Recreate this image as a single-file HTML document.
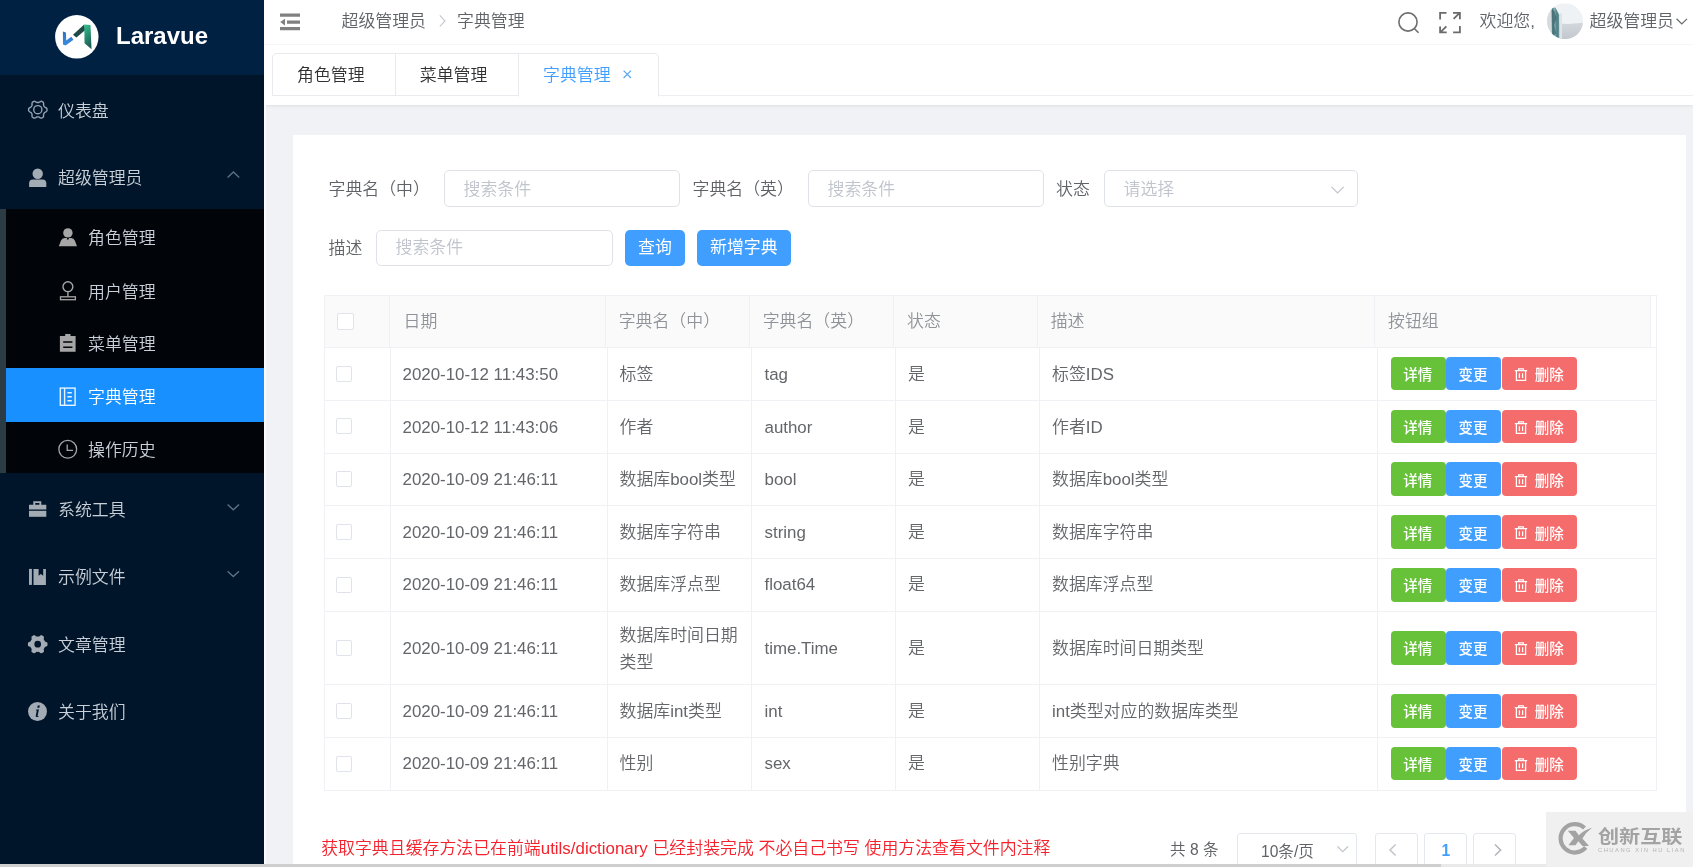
<!DOCTYPE html>
<html lang="zh-CN">
<head>
<meta charset="utf-8">
<title>Laravue - 字典管理</title>
<style>
*{box-sizing:border-box;margin:0;padding:0}
html,body{width:1693px;height:867px;overflow:hidden;background:#f0f2f5}
body{position:relative;font-family:"Liberation Sans","Noto Sans CJK SC",sans-serif;font-size:16.9px;color:#606266;font-weight:350}
#app{position:absolute;left:0;top:0;width:1693px;height:867px;overflow:hidden;will-change:transform}
.a{position:absolute;white-space:nowrap}
svg{position:absolute;overflow:visible}
/* sidebar */
#side{position:absolute;left:0;top:0;width:264px;height:864px;background:#001529;overflow:hidden}
#logo{position:absolute;left:0;top:0;width:264px;height:75px;background:#002142}
#logo .ttl{position:absolute;left:116px;top:20px;font-size:24px;line-height:32px;font-weight:bold;color:#fff}
.mt{position:absolute;left:58px;color:#c9d0d9;font-size:16.9px;line-height:24px;white-space:nowrap}
#sub{position:absolute;left:0;top:209px;width:264px;height:264px;background:#010409}
#sub .bar{position:absolute;left:0;top:0;width:6px;height:264px;background:#2b3c45}
#sub .on{position:absolute;left:6px;top:159px;width:258px;height:53.6px;background:#1890ff}
.st{position:absolute;left:88px;color:#c9d0d9;font-size:16.9px;line-height:24px;white-space:nowrap}
/* header */
#head{position:absolute;left:264px;top:0;width:1429px;height:105px;background:#fff;box-shadow:0 1px 3px rgba(0,21,41,.08)}
#nav{position:absolute;left:0;top:0;width:1429px;height:45px;border-bottom:1px solid #f7f7f7}
.bc{position:absolute;top:9.7px;line-height:24px;font-size:16.9px;color:#5f6368;white-space:nowrap}
#tabs{position:absolute;left:8px;top:53px;height:43px;width:1421px;border-bottom:1px solid #eceef2}
.tab{position:absolute;top:0;height:43px;border:1px solid #e8eaee;background:#fff}
.tt{position:absolute;top:63.7px;line-height:24px;font-size:16.9px;color:#303133;white-space:nowrap}
/* content */
#card{position:absolute;left:293px;top:135px;width:1393px;height:740px;background:#fff}
.lb{position:absolute;font-size:16.9px;line-height:24px;color:#5f6368;white-space:nowrap}
.inp{position:absolute;height:36px;border:1px solid #dfe2e8;border-radius:5px;background:#fff}
.ph{position:absolute;font-size:16.9px;line-height:24px;color:#c0c4cc;white-space:nowrap}
.btn{position:absolute;height:36px;border-radius:5px;background:#409eff}
.bt{position:absolute;color:#fff;font-size:16.9px;line-height:24px;white-space:nowrap;font-weight:400}
/* table */
.hl{position:absolute;background:#ebeef5}
.th{position:absolute;font-size:16.9px;line-height:24px;color:#909399;white-space:nowrap}
.td{position:absolute;font-size:16.9px;line-height:24px;color:#64666a;white-space:nowrap}
.cb{position:absolute;width:16px;height:16px;border:1px solid #e0e3e9;border-radius:2px;background:#fff}
.b{position:absolute;height:33.7px;border-radius:4px}
.bx{position:absolute;color:#fff;font-size:14.5px;line-height:20px;white-space:nowrap;font-weight:500}
.pg{position:absolute;height:34px;border:1px solid #e4e7ed;border-radius:3px;background:#fff}
</style>
</head>
<body><div id="app">
<div id="side">
<div id="logo">
<svg style="left:54.9px;top:14.7px" width="43.7" height="43.7" viewBox="195 130 585 580"><defs><linearGradient id="g1" x1="0" y1="0" x2="0.3" y2="1"><stop offset="0" stop-color="#35c48f"/><stop offset="1" stop-color="#1c5f57"/></linearGradient><linearGradient id="g2" x1="0" y1="0" x2="0" y2="1"><stop offset="0" stop-color="#2f6fc0"/><stop offset="1" stop-color="#3b8fe0"/></linearGradient></defs><circle cx="487" cy="420" r="291" fill="#fff"/><g transform="translate(487 418) scale(1.09) translate(-487 -418)"><path d="M316 353 L353 366 L357 464 L420 420 L446 456 L350 527 L317 514 Z" fill="url(#g2)"/><path d="M440 395 L578 268 L592 335 L482 428 Z" fill="#1f4a45"/><path d="M578 268 L655 275 L668 572 L582 500 Z" fill="url(#g1)"/></g></svg>
<div class="ttl">Laravue</div>
</div>
<svg style="left:0;top:0" width="264" height="864">
<path d="M47.00 109.70 L46.99 110.10 L46.96 110.50 L46.84 110.89 L46.52 111.24 L46.13 111.55 L45.72 111.82 L45.30 112.06 L44.89 112.28 L44.53 112.49 L44.33 112.74 L44.19 113.02 L44.04 113.30 L43.87 113.57 L43.70 113.83 L43.58 114.13 L43.58 114.55 L43.60 115.01 L43.60 115.50 L43.57 115.99 L43.49 116.48 L43.35 116.93 L43.08 117.24 L42.74 117.46 L42.40 117.67 L42.05 117.86 L41.69 118.04 L41.29 118.13 L40.83 118.02 L40.37 117.84 L39.92 117.62 L39.50 117.38 L39.11 117.14 L38.75 116.92 L38.43 116.87 L38.11 116.89 L37.80 116.90 L37.49 116.89 L37.17 116.87 L36.85 116.92 L36.49 117.14 L36.10 117.38 L35.68 117.62 L35.23 117.84 L34.77 118.02 L34.31 118.13 L33.91 118.04 L33.55 117.86 L33.20 117.67 L32.86 117.46 L32.52 117.24 L32.25 116.93 L32.11 116.48 L32.03 115.99 L32.00 115.50 L32.00 115.01 L32.02 114.55 L32.02 114.13 L31.90 113.83 L31.73 113.57 L31.56 113.30 L31.41 113.02 L31.27 112.74 L31.07 112.49 L30.71 112.28 L30.30 112.06 L29.88 111.82 L29.47 111.55 L29.08 111.24 L28.76 110.89 L28.64 110.50 L28.61 110.10 L28.60 109.70 L28.61 109.30 L28.64 108.90 L28.76 108.51 L29.08 108.16 L29.47 107.85 L29.88 107.58 L30.30 107.34 L30.71 107.12 L31.07 106.91 L31.27 106.66 L31.41 106.38 L31.56 106.10 L31.73 105.83 L31.90 105.57 L32.02 105.27 L32.02 104.85 L32.00 104.39 L32.00 103.90 L32.03 103.41 L32.11 102.92 L32.25 102.47 L32.52 102.16 L32.86 101.94 L33.20 101.73 L33.55 101.54 L33.91 101.36 L34.31 101.27 L34.77 101.38 L35.23 101.56 L35.68 101.78 L36.10 102.02 L36.49 102.26 L36.85 102.48 L37.17 102.53 L37.49 102.51 L37.80 102.50 L38.11 102.51 L38.43 102.53 L38.75 102.48 L39.11 102.26 L39.50 102.02 L39.92 101.78 L40.37 101.56 L40.83 101.38 L41.29 101.27 L41.69 101.36 L42.05 101.54 L42.40 101.73 L42.74 101.94 L43.08 102.16 L43.35 102.47 L43.49 102.92 L43.57 103.41 L43.60 103.90 L43.60 104.39 L43.58 104.85 L43.58 105.27 L43.70 105.57 L43.87 105.83 L44.04 106.10 L44.19 106.38 L44.33 106.66 L44.53 106.91 L44.89 107.12 L45.30 107.34 L45.72 107.58 L46.13 107.85 L46.52 108.16 L46.84 108.51 L46.96 108.90 L46.99 109.30Z" fill="none" stroke="#93a3b5" stroke-width="1.4" stroke-linejoin="round"/>
<circle cx="37.8" cy="109.7" r="4.1" fill="none" stroke="#93a3b5" stroke-width="1.4"/>
<circle cx="37.7" cy="173.8" r="5.2" fill="#a3abb5"/>
<path d="M29.1 186.9 v-3.6 a3.8 3.8 0 0 1 3.8 -3.8 h9.6 a3.8 3.8 0 0 1 3.8 3.8 v3.6 Z" fill="#a3abb5"/>
<path d="M227.6 177.4 L233.4 172 L239.2 177.4" fill="none" stroke="#5f6f82" stroke-width="1.4"/>
</svg>
<div class="mt" style="top:99.7px">仪表盘</div>
<div class="mt" style="top:167.1px">超级管理员</div>
<div id="sub"><div class="bar"></div><div class="on"></div></div>
<svg style="left:0;top:0" width="264" height="864">
<circle cx="67.9" cy="232.9" r="4.7" fill="#a6a6a6"/>
<path d="M58.8 246.2 L61 240.5 Q62 238.2 64.5 238 L66.7 238 L67.9 240.3 L69.1 238 L71.3 238 Q73.8 238.2 74.8 240.5 L77 246.2 Z" fill="#a6a6a6"/>
<circle cx="67.9" cy="286.7" r="4.9" fill="none" stroke="#a6a6a6" stroke-width="1.4"/>
<path d="M67.9 291.6 V296.8" stroke="#a6a6a6" stroke-width="1.4" fill="none"/>
<rect x="60.5" y="296.8" width="14.9" height="2.9" fill="none" stroke="#a6a6a6" stroke-width="1.3"/>
<path d="M59.9 336 H65.2 V333.9 H70.5 V336 H75.6 V351.8 H59.9 Z" fill="#a6a6a6"/>
<path d="M63.2 342 H72.4 M63.2 347.2 H72.4" stroke="#010409" stroke-width="1.5"/>
<rect x="60.3" y="388.1" width="14.8" height="17.2" fill="none" stroke="#e8f4ff" stroke-width="1.4"/>
<path d="M64.6 388 V405.4 M67.4 392.7 H71.8 M67.4 396.7 H71.8 M67.4 400.7 H71.8" stroke="#e8f4ff" stroke-width="1.4" fill="none"/>
<circle cx="67.75" cy="449.3" r="8.9" fill="none" stroke="#a6a6a6" stroke-width="1.3"/>
<path d="M67.2 444.6 V450.3 H73" stroke="#a6a6a6" stroke-width="1.3" fill="none"/>
<path d="M33.3 504.8 V501.3 H41.3 V504.8 H46.3 V509.6 H29 V504.8 Z M35.2 504.8 H39.4 V503.1 H35.2 Z" fill="#a3abb5" fill-rule="evenodd"/>
<rect x="29" y="510.8" width="17.3" height="6" fill="#a3abb5"/>
<path d="M227.6 504.4 L233.3 509.8 L239 504.4" fill="none" stroke="#5f6f82" stroke-width="1.4"/>
<path d="M227.6 571.2 L233.3 576.6 L239 571.2" fill="none" stroke="#5f6f82" stroke-width="1.4"/>
<rect x="29" y="568.9" width="2.9" height="16" fill="#a3abb5"/>
<path d="M33.5 568.9 H38.6 V575.8 L40.9 574 L43.2 575.8 V568.9 H45.9 V584.9 H33.5 Z" fill="#a3abb5"/>
<path d="M47.50 644.20 L47.49 644.63 L47.46 645.05 L47.42 645.48 L47.25 645.88 L46.72 646.20 L46.15 646.46 L45.58 646.68 L45.03 646.87 L44.81 647.15 L44.68 647.45 L44.53 647.76 L44.37 648.05 L44.19 648.34 L44.01 648.62 L43.81 648.89 L43.68 649.22 L43.79 649.78 L43.89 650.39 L43.94 651.01 L43.93 651.63 L43.67 651.97 L43.32 652.23 L42.97 652.47 L42.60 652.69 L42.23 652.89 L41.84 653.08 L41.45 653.25 L41.02 653.31 L40.48 653.01 L39.96 652.65 L39.49 652.27 L39.06 651.89 L38.71 651.83 L38.37 651.87 L38.04 651.89 L37.70 651.90 L37.36 651.89 L37.03 651.87 L36.69 651.83 L36.34 651.89 L35.91 652.27 L35.44 652.65 L34.92 653.01 L34.38 653.31 L33.95 653.25 L33.56 653.08 L33.17 652.89 L32.80 652.69 L32.43 652.47 L32.08 652.23 L31.73 651.97 L31.47 651.63 L31.46 651.01 L31.51 650.39 L31.61 649.78 L31.72 649.22 L31.59 648.89 L31.39 648.62 L31.21 648.34 L31.03 648.05 L30.87 647.76 L30.72 647.45 L30.59 647.15 L30.37 646.87 L29.82 646.68 L29.25 646.46 L28.68 646.20 L28.15 645.88 L27.98 645.48 L27.94 645.05 L27.91 644.63 L27.90 644.20 L27.91 643.77 L27.94 643.35 L27.98 642.92 L28.15 642.52 L28.68 642.20 L29.25 641.94 L29.82 641.72 L30.37 641.53 L30.59 641.25 L30.72 640.95 L30.87 640.64 L31.03 640.35 L31.21 640.06 L31.39 639.78 L31.59 639.51 L31.72 639.18 L31.61 638.62 L31.51 638.01 L31.46 637.39 L31.47 636.77 L31.73 636.43 L32.08 636.17 L32.43 635.93 L32.80 635.71 L33.17 635.51 L33.56 635.32 L33.95 635.15 L34.38 635.09 L34.92 635.39 L35.44 635.75 L35.91 636.13 L36.34 636.51 L36.69 636.57 L37.03 636.53 L37.36 636.51 L37.70 636.50 L38.04 636.51 L38.37 636.53 L38.71 636.57 L39.06 636.51 L39.49 636.13 L39.96 635.75 L40.48 635.39 L41.02 635.09 L41.45 635.15 L41.84 635.32 L42.23 635.51 L42.60 635.71 L42.97 635.93 L43.32 636.17 L43.67 636.43 L43.93 636.77 L43.94 637.39 L43.89 638.01 L43.79 638.62 L43.68 639.18 L43.81 639.51 L44.01 639.78 L44.19 640.06 L44.37 640.35 L44.53 640.64 L44.68 640.95 L44.81 641.25 L45.03 641.53 L45.58 641.72 L46.15 641.94 L46.72 642.20 L47.25 642.52 L47.42 642.92 L47.46 643.35 L47.49 643.77Z M41.05 644.2 A3.35 3.35 0 1 0 34.35 644.2 A3.35 3.35 0 1 0 41.05 644.2 Z" fill="#a3abb5" fill-rule="evenodd"/>
<circle cx="37.5" cy="711.5" r="9.5" fill="#a3abb5"/>
<path d="M39.8 705.6 L37.7 705.6 L37.3 707.7 L39.4 707.7 Z M38.9 709.3 L36 709.7 L35.9 710.6 L36.8 710.6 L35.7 716 L36 717.1 L38.5 716.8 L38.6 715.9 L37.6 715.9 Z" fill="#001529"/>
</svg>
<div class="st" style="top:227.1px">角色管理</div>
<div class="st" style="top:280.5px">用户管理</div>
<div class="st" style="top:333.1px">菜单管理</div>
<div class="st" style="top:385.8px;color:#fff">字典管理</div>
<div class="st" style="top:438.9px">操作历史</div>
<div class="mt" style="top:498.8px">系统工具</div>
<div class="mt" style="top:566.0px">示例文件</div>
<div class="mt" style="top:633.8px">文章管理</div>
<div class="mt" style="top:701.1px">关于我们</div>
</div>
<div id="head"><div id="nav"></div><div id="tabs">
<div class="tab" style="left:0;width:124px;border-radius:5px 0 0 0"></div>
<div class="tab" style="left:123px;width:124px"></div>
<div class="tab" style="left:246px;width:141px;border-bottom-color:#fff;border-radius:0 5px 0 0;height:44px"></div>
</div></div>
<svg style="left:0;top:0" width="1693" height="110">
<path d="M280 15.1 H300 M287 22.1 H300 M280 28.7 H300" stroke="#808080" stroke-width="3.2" fill="none"/>
<path d="M280.2 22.1 L285 18.7 V25.5 Z" fill="#808080"/>
<path d="M439.8 15.3 L445 20.9 L439.8 26.5" stroke="#c0c4cc" stroke-width="1.1" fill="none"/>
<path d="M623.6 70.6 L631 78 M631 70.6 L623.6 78" stroke="#5aa7ee" stroke-width="1.2" fill="none"/>
<circle cx="1408" cy="22" r="9.1" fill="none" stroke="#6e6e6e" stroke-width="1.6"/>
<path d="M1414.5 28.8 L1418.6 32.8" stroke="#6e6e6e" stroke-width="1.6" fill="none"/>
<path d="M1440.1 19.6 V12.8 H1446.5 M1453.1 32.4 H1459.9 V26 M1453.6 18.9 L1459.7 12.8 M1453 12.8 H1459.9 V19.2 M1446.4 26.4 L1440.3 32.4 M1440.1 26.5 V32.4 H1446.7" stroke="#6b6b6b" stroke-width="1.8" fill="none"/>
<path d="M1676.5 18.8 L1681.8 24 L1687 18.8" stroke="#6a6a6a" stroke-width="1.2" fill="none"/>
</svg>
<div class="bc" style="left:341.5px">超级管理员</div>
<div class="bc" style="left:457px">字典管理</div>
<div class="bc" style="left:1479.5px">欢迎您,</div>
<div class="bc" style="left:1589.5px">超级管理员</div>
<svg style="left:1547px;top:2.7px" width="36" height="36.4" viewBox="0 0 36 36"><defs><clipPath id="av"><circle cx="18" cy="18" r="18"/></clipPath><linearGradient id="ag" x1="0" y1="0" x2="0" y2="1"><stop offset="0" stop-color="#d3d8dd"/><stop offset="1" stop-color="#c3c8ce"/></linearGradient><linearGradient id="at" x1="0" y1="0" x2="1" y2="0"><stop offset="0" stop-color="#3f666c"/><stop offset="0.35" stop-color="#7fb3b6"/><stop offset="0.7" stop-color="#4c7d84"/><stop offset="1" stop-color="#6d979b"/></linearGradient></defs><g clip-path="url(#av)"><rect width="36" height="36" fill="#eff2f4"/><rect x="0" y="0" width="5" height="36" fill="#d6dbde"/><path d="M12 20.3 L21 20.8 L36 19.6 V36 H12 Z" fill="url(#ag)"/><path d="M4.6 4 L8.5 4.5 L12.4 12 L12.4 36 L5 36 Z" fill="url(#at)"/><path d="M5.4 6 L7.5 8 L9.6 15 L7.2 22 L9 30 L6 33 Z" fill="#2f5157" opacity=".55"/><path d="M12.4 10 H15 V36 H12.4 Z" fill="#dfe4e7"/></g></svg>
<div class="tt" style="left:297px">角色管理</div>
<div class="tt" style="left:419.8px">菜单管理</div>
<div class="tt" style="left:543px;color:#409eff">字典管理</div>
<div class="a" style="left:264px;top:105px;width:2px;height:759px;background:#fafbfc"></div>
<div id="card"></div>
<div class="lb" style="left:328.5px;top:177.7px">字典名（中）</div>
<div class="inp" style="left:444.0px;top:170.0px;width:235.5px;height:37px"></div>
<div class="ph" style="left:463.5px;top:178.0px">搜索条件</div>
<div class="lb" style="left:692.5px;top:177.7px">字典名（英）</div>
<div class="inp" style="left:808.0px;top:170.0px;width:235.5px;height:37px"></div>
<div class="ph" style="left:827.5px;top:178.0px">搜索条件</div>
<div class="lb" style="left:1056.0px;top:177.7px">状态</div>
<div class="inp" style="left:1104.0px;top:170.0px;width:254.0px;height:37px"></div>
<div class="ph" style="left:1123.5px;top:178.0px">请选择</div>
<svg style="left:0;top:0" width="1693" height="300"><path d="M1331.5 186.8 L1337.6 193 L1343.7 186.8" stroke="#c0c4cc" stroke-width="1.2" fill="none"/></svg>
<div class="lb" style="left:328.5px;top:237.2px">描述</div>
<div class="inp" style="left:376.0px;top:230.0px;width:236.5px;height:36px"></div>
<div class="ph" style="left:395.5px;top:236.0px">搜索条件</div>
<div class="btn" style="left:625px;top:230px;width:60px"></div><div class="bt" style="left:638px;top:235.5px">查询</div>
<div class="btn" style="left:696.5px;top:230px;width:94.5px"></div><div class="bt" style="left:710px;top:235.5px">新增字典</div>
<div class="a" style="left:323.5px;top:295.0px;width:1327.5px;height:53.0px;background:#fafafa"></div>
<div class="hl" style="left:323.5px;top:295.0px;width:1333.0px;height:1px;background:#eff1f5"></div>
<div class="hl" style="left:323.5px;top:347.0px;width:1333.0px;height:1px;background:#eff1f5"></div>
<div class="hl" style="left:323.5px;top:399.8px;width:1333.0px;height:1px;background:#eff1f5"></div>
<div class="hl" style="left:323.5px;top:452.6px;width:1333.0px;height:1px;background:#eff1f5"></div>
<div class="hl" style="left:323.5px;top:505.4px;width:1333.0px;height:1px;background:#eff1f5"></div>
<div class="hl" style="left:323.5px;top:558.2px;width:1333.0px;height:1px;background:#eff1f5"></div>
<div class="hl" style="left:323.5px;top:611.0px;width:1333.0px;height:1px;background:#eff1f5"></div>
<div class="hl" style="left:323.5px;top:684.2px;width:1333.0px;height:1px;background:#eff1f5"></div>
<div class="hl" style="left:323.5px;top:737.0px;width:1333.0px;height:1px;background:#eff1f5"></div>
<div class="hl" style="left:323.5px;top:789.8px;width:1333.0px;height:1px;background:#eff1f5"></div>
<div class="hl" style="left:323.5px;top:295.0px;width:1px;height:495.8px;background:#eff1f5"></div>
<div class="hl" style="left:1655.5px;top:295.0px;width:1px;height:495.8px;background:#eff1f5"></div>
<div class="hl" style="left:389.0px;top:295.0px;width:1px;height:53.0px;background:#eff1f5"></div>
<div class="hl" style="left:605.3px;top:295.0px;width:1px;height:53.0px;background:#eff1f5"></div>
<div class="hl" style="left:749.0px;top:295.0px;width:1px;height:53.0px;background:#eff1f5"></div>
<div class="hl" style="left:893.0px;top:295.0px;width:1px;height:53.0px;background:#eff1f5"></div>
<div class="hl" style="left:1037.0px;top:295.0px;width:1px;height:53.0px;background:#eff1f5"></div>
<div class="hl" style="left:1374.0px;top:295.0px;width:1px;height:53.0px;background:#eff1f5"></div>
<div class="hl" style="left:1650.4px;top:295.0px;width:1px;height:53.0px;background:#eff1f5"></div>
<div class="hl" style="left:389.5px;top:348.0px;width:1px;height:442.8px;background:#eff1f5"></div>
<div class="hl" style="left:606.8px;top:348.0px;width:1px;height:442.8px;background:#eff1f5"></div>
<div class="hl" style="left:751.0px;top:348.0px;width:1px;height:442.8px;background:#eff1f5"></div>
<div class="hl" style="left:895.0px;top:348.0px;width:1px;height:442.8px;background:#eff1f5"></div>
<div class="hl" style="left:1039.0px;top:348.0px;width:1px;height:442.8px;background:#eff1f5"></div>
<div class="hl" style="left:1377.0px;top:348.0px;width:1px;height:442.8px;background:#eff1f5"></div>
<div class="cb" style="left:337px;top:313px;width:17px;height:17px"></div>
<div class="th" style="left:403.5px;top:309.8px">日期</div>
<div class="th" style="left:618.7px;top:309.8px">字典名（中）</div>
<div class="th" style="left:762.7px;top:309.8px">字典名（英）</div>
<div class="th" style="left:907.0px;top:309.8px">状态</div>
<div class="th" style="left:1050.7px;top:309.8px">描述</div>
<div class="th" style="left:1388.0px;top:309.8px">按钮组</div>
<div class="cb" style="left:336.3px;top:365.5px"></div>
<div class="td" style="left:402.5px;top:363.1px">2020-10-12 11:43:50</div>
<div class="td" style="left:619.5px;top:363.1px">标签</div>
<div class="td" style="left:764.5px;top:363.1px">tag</div>
<div class="td" style="left:908px;top:363.1px">是</div>
<div class="td" style="left:1052px;top:363.1px">标签IDS</div>
<div class="b" style="left:1391px;top:356.8px;width:54.8px;background:#67c23a"></div>
<div class="b" style="left:1446.4px;top:356.8px;width:54.8px;background:#409eff"></div>
<div class="b" style="left:1502px;top:356.8px;width:75px;background:#f56c6c"></div>
<div class="bx" style="left:1403.2px;top:365.1px">详情</div>
<div class="bx" style="left:1458.6px;top:365.1px">变更</div>
<div class="bx" style="left:1534.8px;top:365.1px">删除</div>
<svg style="left:1514px;top:367.9px" width="14" height="14" viewBox="0 0 14 14"><path d="M0.8 2.6 H13.2 M4.6 2.4 V0.9 H9.4 V2.4 M2.4 2.8 V12.4 H11.6 V2.8 M5.4 5.2 V10 M8.6 5.2 V10" stroke="#fff" stroke-width="1.25" fill="none"/></svg>
<div class="cb" style="left:336.3px;top:418.3px"></div>
<div class="td" style="left:402.5px;top:415.6px">2020-10-12 11:43:06</div>
<div class="td" style="left:619.5px;top:415.6px">作者</div>
<div class="td" style="left:764.5px;top:415.6px">author</div>
<div class="td" style="left:908px;top:415.6px">是</div>
<div class="td" style="left:1052px;top:415.6px">作者ID</div>
<div class="b" style="left:1391px;top:409.6px;width:54.8px;background:#67c23a"></div>
<div class="b" style="left:1446.4px;top:409.6px;width:54.8px;background:#409eff"></div>
<div class="b" style="left:1502px;top:409.6px;width:75px;background:#f56c6c"></div>
<div class="bx" style="left:1403.2px;top:417.9px">详情</div>
<div class="bx" style="left:1458.6px;top:417.9px">变更</div>
<div class="bx" style="left:1534.8px;top:417.9px">删除</div>
<svg style="left:1514px;top:420.7px" width="14" height="14" viewBox="0 0 14 14"><path d="M0.8 2.6 H13.2 M4.6 2.4 V0.9 H9.4 V2.4 M2.4 2.8 V12.4 H11.6 V2.8 M5.4 5.2 V10 M8.6 5.2 V10" stroke="#fff" stroke-width="1.25" fill="none"/></svg>
<div class="cb" style="left:336.3px;top:471.1px"></div>
<div class="td" style="left:402.5px;top:467.5px">2020-10-09 21:46:11</div>
<div class="td" style="left:619.5px;top:467.5px">数据库bool类型</div>
<div class="td" style="left:764.5px;top:467.5px">bool</div>
<div class="td" style="left:908px;top:467.5px">是</div>
<div class="td" style="left:1052px;top:467.5px">数据库bool类型</div>
<div class="b" style="left:1391px;top:462.4px;width:54.8px;background:#67c23a"></div>
<div class="b" style="left:1446.4px;top:462.4px;width:54.8px;background:#409eff"></div>
<div class="b" style="left:1502px;top:462.4px;width:75px;background:#f56c6c"></div>
<div class="bx" style="left:1403.2px;top:470.7px">详情</div>
<div class="bx" style="left:1458.6px;top:470.7px">变更</div>
<div class="bx" style="left:1534.8px;top:470.7px">删除</div>
<svg style="left:1514px;top:473.5px" width="14" height="14" viewBox="0 0 14 14"><path d="M0.8 2.6 H13.2 M4.6 2.4 V0.9 H9.4 V2.4 M2.4 2.8 V12.4 H11.6 V2.8 M5.4 5.2 V10 M8.6 5.2 V10" stroke="#fff" stroke-width="1.25" fill="none"/></svg>
<div class="cb" style="left:336.3px;top:523.9px"></div>
<div class="td" style="left:402.5px;top:520.5px">2020-10-09 21:46:11</div>
<div class="td" style="left:619.5px;top:520.5px">数据库字符串</div>
<div class="td" style="left:764.5px;top:520.5px">string</div>
<div class="td" style="left:908px;top:520.5px">是</div>
<div class="td" style="left:1052px;top:520.5px">数据库字符串</div>
<div class="b" style="left:1391px;top:515.2px;width:54.8px;background:#67c23a"></div>
<div class="b" style="left:1446.4px;top:515.2px;width:54.8px;background:#409eff"></div>
<div class="b" style="left:1502px;top:515.2px;width:75px;background:#f56c6c"></div>
<div class="bx" style="left:1403.2px;top:523.5px">详情</div>
<div class="bx" style="left:1458.6px;top:523.5px">变更</div>
<div class="bx" style="left:1534.8px;top:523.5px">删除</div>
<svg style="left:1514px;top:526.3px" width="14" height="14" viewBox="0 0 14 14"><path d="M0.8 2.6 H13.2 M4.6 2.4 V0.9 H9.4 V2.4 M2.4 2.8 V12.4 H11.6 V2.8 M5.4 5.2 V10 M8.6 5.2 V10" stroke="#fff" stroke-width="1.25" fill="none"/></svg>
<div class="cb" style="left:336.3px;top:576.7px"></div>
<div class="td" style="left:402.5px;top:573.3px">2020-10-09 21:46:11</div>
<div class="td" style="left:619.5px;top:573.3px">数据库浮点型</div>
<div class="td" style="left:764.5px;top:573.3px">float64</div>
<div class="td" style="left:908px;top:573.3px">是</div>
<div class="td" style="left:1052px;top:573.3px">数据库浮点型</div>
<div class="b" style="left:1391px;top:568.0px;width:54.8px;background:#67c23a"></div>
<div class="b" style="left:1446.4px;top:568.0px;width:54.8px;background:#409eff"></div>
<div class="b" style="left:1502px;top:568.0px;width:75px;background:#f56c6c"></div>
<div class="bx" style="left:1403.2px;top:576.3px">详情</div>
<div class="bx" style="left:1458.6px;top:576.3px">变更</div>
<div class="bx" style="left:1534.8px;top:576.3px">删除</div>
<svg style="left:1514px;top:579.1px" width="14" height="14" viewBox="0 0 14 14"><path d="M0.8 2.6 H13.2 M4.6 2.4 V0.9 H9.4 V2.4 M2.4 2.8 V12.4 H11.6 V2.8 M5.4 5.2 V10 M8.6 5.2 V10" stroke="#fff" stroke-width="1.25" fill="none"/></svg>
<div class="cb" style="left:336.3px;top:639.7px"></div>
<div class="td" style="left:402.5px;top:636.6px">2020-10-09 21:46:11</div>
<div class="td" style="left:619.5px;top:621.9px;line-height:27.6px">数据库时间日期<br>类型</div>
<div class="td" style="left:764.5px;top:636.6px">time.Time</div>
<div class="td" style="left:908px;top:636.6px">是</div>
<div class="td" style="left:1052px;top:636.6px">数据库时间日期类型</div>
<div class="b" style="left:1391px;top:631.0px;width:54.8px;background:#67c23a"></div>
<div class="b" style="left:1446.4px;top:631.0px;width:54.8px;background:#409eff"></div>
<div class="b" style="left:1502px;top:631.0px;width:75px;background:#f56c6c"></div>
<div class="bx" style="left:1403.2px;top:639.3px">详情</div>
<div class="bx" style="left:1458.6px;top:639.3px">变更</div>
<div class="bx" style="left:1534.8px;top:639.3px">删除</div>
<svg style="left:1514px;top:642.1px" width="14" height="14" viewBox="0 0 14 14"><path d="M0.8 2.6 H13.2 M4.6 2.4 V0.9 H9.4 V2.4 M2.4 2.8 V12.4 H11.6 V2.8 M5.4 5.2 V10 M8.6 5.2 V10" stroke="#fff" stroke-width="1.25" fill="none"/></svg>
<div class="cb" style="left:336.3px;top:702.7px"></div>
<div class="td" style="left:402.5px;top:699.8px">2020-10-09 21:46:11</div>
<div class="td" style="left:619.5px;top:699.8px">数据库int类型</div>
<div class="td" style="left:764.5px;top:699.8px">int</div>
<div class="td" style="left:908px;top:699.8px">是</div>
<div class="td" style="left:1052px;top:699.8px">int类型对应的数据库类型</div>
<div class="b" style="left:1391px;top:694.0px;width:54.8px;background:#67c23a"></div>
<div class="b" style="left:1446.4px;top:694.0px;width:54.8px;background:#409eff"></div>
<div class="b" style="left:1502px;top:694.0px;width:75px;background:#f56c6c"></div>
<div class="bx" style="left:1403.2px;top:702.3px">详情</div>
<div class="bx" style="left:1458.6px;top:702.3px">变更</div>
<div class="bx" style="left:1534.8px;top:702.3px">删除</div>
<svg style="left:1514px;top:705.1px" width="14" height="14" viewBox="0 0 14 14"><path d="M0.8 2.6 H13.2 M4.6 2.4 V0.9 H9.4 V2.4 M2.4 2.8 V12.4 H11.6 V2.8 M5.4 5.2 V10 M8.6 5.2 V10" stroke="#fff" stroke-width="1.25" fill="none"/></svg>
<div class="cb" style="left:336.3px;top:755.5px"></div>
<div class="td" style="left:402.5px;top:752.1px">2020-10-09 21:46:11</div>
<div class="td" style="left:619.5px;top:752.1px">性别</div>
<div class="td" style="left:764.5px;top:752.1px">sex</div>
<div class="td" style="left:908px;top:752.1px">是</div>
<div class="td" style="left:1052px;top:752.1px">性别字典</div>
<div class="b" style="left:1391px;top:746.8px;width:54.8px;background:#67c23a"></div>
<div class="b" style="left:1446.4px;top:746.8px;width:54.8px;background:#409eff"></div>
<div class="b" style="left:1502px;top:746.8px;width:75px;background:#f56c6c"></div>
<div class="bx" style="left:1403.2px;top:755.1px">详情</div>
<div class="bx" style="left:1458.6px;top:755.1px">变更</div>
<div class="bx" style="left:1534.8px;top:755.1px">删除</div>
<svg style="left:1514px;top:757.9px" width="14" height="14" viewBox="0 0 14 14"><path d="M0.8 2.6 H13.2 M4.6 2.4 V0.9 H9.4 V2.4 M2.4 2.8 V12.4 H11.6 V2.8 M5.4 5.2 V10 M8.6 5.2 V10" stroke="#fff" stroke-width="1.25" fill="none"/></svg>
<div class="a" style="left:321.2px;top:836.8px;font-size:16.9px;line-height:24px;color:#f5222d">获取字典且缓存方法已在前端utils/dictionary 已经封装完成 不必自己书写 使用方法查看文件内注释</div>
<div class="a" style="left:1170px;top:838.3px;font-size:15.6px;line-height:24px;color:#606266">共 8 条</div>
<div class="pg" style="left:1237px;top:833px;width:120px"></div>
<div class="a" style="left:1261px;top:839.5px;font-size:15.6px;line-height:24px;color:#606266">10条/页</div>
<div class="pg" style="left:1375px;top:833px;width:43px"></div>
<div class="pg" style="left:1424px;top:833px;width:43px"></div>
<div class="pg" style="left:1473px;top:833px;width:43px"></div>
<div class="a" style="left:1441.5px;top:838.5px;font-size:15.6px;line-height:24px;color:#409eff;font-weight:bold">1</div>
<svg style="left:0;top:800px" width="1693" height="67"><path d="M1337.5 46.5 L1342.7 51.7 L1348 46.5" stroke="#c0c4cc" stroke-width="1.2" fill="none"/><path d="M1395.6 44.5 L1390 50 L1395.6 55.5" stroke="#c0c4cc" stroke-width="1.5" fill="none"/><path d="M1495 44.5 L1500.6 50 L1495 55.5" stroke="#b0b3b9" stroke-width="1.5" fill="none"/></svg>
<div class="a" style="left:0;top:864px;width:1693px;height:4px;background:#e9e9e9"></div>
<div class="a" style="left:0;top:864px;width:1441px;height:4px;background:#cfcfcf"></div>
<div class="a" style="left:1545.5px;top:812px;width:148px;height:55px;background:#f0f0f0"></div>
<svg style="left:1550px;top:815px" width="60" height="47" viewBox="0 0 1107 867"><path d="M636.7 238.4 A262 262 0 1 0 658.7 598.4" fill="none" stroke="#a3a3a3" stroke-width="78"/><path d="M330 290 H470 L532 372 Q640 270 775 235 Q660 320 598 432 L720 570 H600 L522 482 L470 560 H340 L442 426 Z" fill="#a3a3a3"/></svg>
<div class="a" style="left:1598.3px;top:823.5px;font-size:18.6px;line-height:26px;color:#a3a3a3;font-weight:bold;transform:scaleX(1.135);transform-origin:0 0">创新互联</div>
<div class="a" style="left:1598px;top:846.2px;font-size:5.8px;line-height:8px;color:#b4b4b4;letter-spacing:1.5px">CHUANG XIN HU LIAN</div>
</div></body>
</html>
